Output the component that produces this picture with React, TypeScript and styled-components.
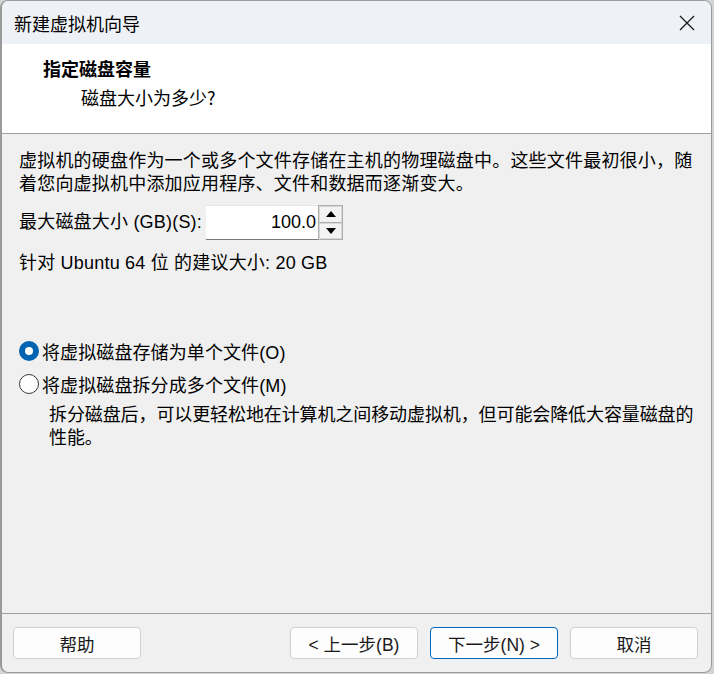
import React from "react";
import styled, { createGlobalStyle } from "styled-components";

const Global = createGlobalStyle`
  html, body {
    margin: 0;
    padding: 0;
    background: #d4d4d4;
  }
  body {
    font-family: "Liberation Sans", "Noto Sans CJK SC", sans-serif;
    font-size: 18px;
    color: #000;
  }
  * { box-sizing: border-box; }
`;

const Window = styled.div`
  width: 712px;
  height: 673px;
  border: 1px solid #9a9a9a;
  border-left-width: 2px;
  border-radius: 8px;
  overflow: hidden;
  background: #f0f0f0;
  display: flex;
  flex-direction: column;
`;

const TitleBar = styled.div`
  height: 43px;
  flex: none;
  background: #eef2f6;
  display: flex;
  align-items: center;
  justify-content: space-between;
  padding: 0 16px 0 12px;
`;

const TitleText = styled.span`
  font-family: "Noto Sans CJK SC", sans-serif;
  font-size: 18px;
  line-height: 24px;
  color: #000;
`;

const CloseButton = styled.div`
  width: 16px;
  height: 16px;
  display: flex;
  align-items: center;
  justify-content: center;
`;

const Header = styled.div`
  flex: none;
  height: 90px;
  background: #fff;
  border-bottom: 1px solid #a0a0a0;
  padding: 12px 0 0 41px;
`;

const HeaderTitle = styled.div`
  font-family: "Noto Sans CJK SC", sans-serif;
  font-weight: 700;
  font-size: 18px;
  line-height: 24px;
`;

const HeaderSub = styled.div`
  font-family: "Noto Sans CJK SC", sans-serif;
  font-size: 18px;
  line-height: 24px;
  margin-top: 5px;
  padding-left: 38px;
`;

const Content = styled.div`
  flex: 1;
  padding: 16px 0 0 17px;
  display: flex;
  flex-direction: column;
`;

const Paragraph = styled.p`
  margin: 0;
  line-height: 23px;
  white-space: nowrap;
  letter-spacing: 0.2px;
`;

const SizeRow = styled.div`
  display: flex;
  align-items: center;
  margin-top: 9px;
  height: 35px;
`;

const SizeLabel = styled.label`
  width: 187px;
  flex: none;
  line-height: 23px;
  white-space: nowrap;
  letter-spacing: 0.2px;
`;

const NumberBox = styled.div`
  width: 112px;
  height: 35px;
  background: #fff;
  border-top: 1px solid #e6e6e6;
  border-bottom: 1px solid #7a7a7a;
  display: flex;
  align-items: center;
  justify-content: flex-end;
  padding-right: 2px;
  font-size: 18px;
`;

const Spinner = styled.div`
  width: 25px;
  height: 35px;
  border: 1px solid #adadad;
  display: flex;
  flex-direction: column;
  background: #f0f0f0;
`;

const SpinButton = styled.div<{ $top?: boolean }>`
  flex: 1;
  display: flex;
  align-items: center;
  justify-content: center;
  border: 1px solid #d8d8d8;
  ${(p) => (p.$top ? "border-bottom-color: #adadad;" : "")}
  background: #f3f3f3;
`;

const Recommend = styled.div`
  margin-top: 12px;
  line-height: 23px;
  white-space: nowrap;
  letter-spacing: 0.2px;
`;

const RadioGroup = styled.div`
  margin-top: 61px;
  display: flex;
  flex-direction: column;
  gap: 3px;
`;

const RadioRow = styled.label`
  display: flex;
  align-items: center;
  height: 30px;
  gap: 3px;
  white-space: nowrap;
  letter-spacing: 0.1px;
`;

const RadioCircle = styled.span<{ $checked?: boolean }>`
  width: 20px;
  height: 20px;
  border-radius: 50%;
  flex: none;
  display: flex;
  align-items: center;
  justify-content: center;
  background: ${(p) => (p.$checked ? "#0063b1" : "#fff")};
  border: ${(p) => (p.$checked ? "none" : "1px solid #3a3a3a")};
  &::after {
    content: "";
    display: ${(p) => (p.$checked ? "block" : "none")};
    width: 8px;
    height: 8px;
    border-radius: 50%;
    background: #fff;
  }
`;

const Description = styled.div`
  margin-top: 5px;
  padding-left: 30px;
  line-height: 23px;
  white-space: nowrap;
  letter-spacing: -0.1px;
`;

const Footer = styled.div`
  flex: none;
  height: 59px;
  border-top: 1px solid #a0a0a0;
  display: flex;
  align-items: flex-start;
  padding: 13px 13px 0 11px;
`;

const Spacer = styled.div`
  flex: 1;
`;

const Button = styled.button<{ $primary?: boolean }>`
  width: 128px;
  height: 32px;
  border-radius: 4px;
  background: #fdfdfd;
  border: 1px solid ${(p) => (p.$primary ? "#0067c0" : "#d0d0d0")};
  font-family: "Liberation Sans", "Noto Sans CJK SC", sans-serif;
  font-size: 17.5px;
  color: #1a1a1a;
  padding: 0;
  display: flex;
  align-items: center;
  justify-content: center;
`;

const ButtonGroup = styled.div`
  display: flex;
  gap: 12px;
`;

const Arrow = ({ up }: { up?: boolean }) => (
  <svg width="10" height="6" viewBox="0 0 10 6">
    {up ? <polygon points="0,6 10,6 5,0" fill="#000" /> : <polygon points="0,0 10,0 5,6" fill="#000" />}
  </svg>
);

export default function App() {
  return (
    <>
      <Global />
      <Window>
        <TitleBar>
          <TitleText>新建虚拟机向导</TitleText>
          <CloseButton>
            <svg width="16" height="16" viewBox="0 0 16 16">
              <path d="M1 1 L15 15 M15 1 L1 15" stroke="#1a1a1a" strokeWidth="1.3" fill="none" />
            </svg>
          </CloseButton>
        </TitleBar>
        <Header>
          <HeaderTitle>指定磁盘容量</HeaderTitle>
          <HeaderSub>磁盘大小为多少?</HeaderSub>
        </Header>
        <Content>
          <Paragraph>
            虚拟机的硬盘作为一个或多个文件存储在主机的物理磁盘中。这些文件最初很小，随
            <br />
            着您向虚拟机中添加应用程序、文件和数据而逐渐变大。
          </Paragraph>
          <SizeRow>
            <SizeLabel>最大磁盘大小 (GB)(S):</SizeLabel>
            <NumberBox>100.0</NumberBox>
            <Spinner>
              <SpinButton $top>
                <Arrow up />
              </SpinButton>
              <SpinButton>
                <Arrow />
              </SpinButton>
            </Spinner>
          </SizeRow>
          <Recommend>针对 Ubuntu 64 位 的建议大小: 20 GB</Recommend>
          <RadioGroup>
            <RadioRow>
              <RadioCircle $checked />
              将虚拟磁盘存储为单个文件(O)
            </RadioRow>
            <RadioRow>
              <RadioCircle />
              将虚拟磁盘拆分成多个文件(M)
            </RadioRow>
          </RadioGroup>
          <Description>
            拆分磁盘后，可以更轻松地在计算机之间移动虚拟机，但可能会降低大容量磁盘的
            <br />
            性能。
          </Description>
        </Content>
        <Footer>
          <Button>帮助</Button>
          <Spacer />
          <ButtonGroup>
            <Button>&lt; 上一步(B)</Button>
            <Button $primary>下一步(N) &gt;</Button>
            <Button>取消</Button>
          </ButtonGroup>
        </Footer>
      </Window>
    </>
  );
}
